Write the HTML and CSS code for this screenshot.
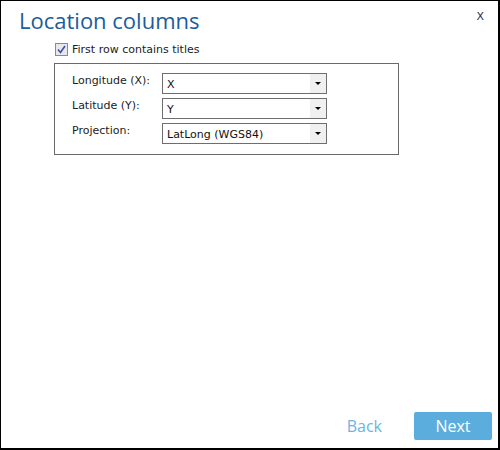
FILE: index.html
```html
<!DOCTYPE html>
<html>
<head>
<meta charset="utf-8">
<link rel="stylesheet" href="styles.css">
</head>
<body>
<div class="dialog">
  <div class="header">
    <h1 class="title">Location columns</h1>
    <span class="close">X</span>
  </div>
  <div class="content">
    <label class="check-row">
      <span class="checkbox">
        <svg width="9" height="9" viewBox="0 0 9 9"><path d="M1 4.5 L3.5 7.5 L8 1" fill="none" stroke="#3a4fb0" stroke-width="1.6"/></svg>
      </span>
      <span class="check-label">First row contains titles</span>
    </label>
    <div class="group">
      <div class="field">
        <span class="field-label">Longitude (X):</span>
        <div class="select"><span class="select-value">X</span><span class="select-arrow"></span></div>
      </div>
      <div class="field">
        <span class="field-label">Latitude (Y):</span>
        <div class="select"><span class="select-value">Y</span><span class="select-arrow"></span></div>
      </div>
      <div class="field">
        <span class="field-label">Projection:</span>
        <div class="select"><span class="select-value">LatLong (WGS84)</span><span class="select-arrow"></span></div>
      </div>
    </div>
  </div>
  <div class="footer">
    <span class="back">Back</span>
    <span class="next">Next</span>
  </div>
</div>
</body>
</html>
```
FILE: styles.css
```css
html, body {
  margin: 0;
  padding: 0;
  background: #fff;
}
.dialog {
  width: 500px;
  height: 450px;
  box-sizing: border-box;
  border: 1px solid #000;
  border-right-width: 2px;
  border-bottom-width: 2px;
  display: flex;
  flex-direction: column;
  font-family: "DejaVu Sans", sans-serif;
}
.header {
  display: flex;
  justify-content: space-between;
  align-items: flex-start;
}
.title {
  margin: 4px 0 0 18px;
  font-family: "Open Sans", sans-serif;
  font-weight: 400;
  font-size: 22px;
  line-height: 30px;
  color: #1b5c9c;
}
.close {
  margin: 9px 14px 0 0;
  font-size: 11px;
  color: #1e2f55;
}
.content {
  padding: 8px 0 0 53px;
}
.check-row {
  display: flex;
  align-items: center;
  gap: 4px;
  margin-left: 1px;
  height: 13px;
}
.checkbox {
  width: 11px;
  height: 11px;
  border: 1px solid #8a8a8a;
  background: #e8e8ec;
  display: flex;
  align-items: center;
  justify-content: center;
}
.check-label {
  font-size: 11px;
  color: #222;
}
.group {
  margin-top: 7px;
  width: 345px;
  height: 92px;
  border: 1px solid #6a6a6a;
  box-sizing: border-box;
  padding: 9px 0 0 17px;
  display: flex;
  flex-direction: column;
  gap: 4px;
}
.field {
  display: flex;
  align-items: flex-start;
}
.field-label {
  width: 90px;
  font-size: 11px;
  color: #222;
  padding-top: 1px;
}
.select {
  width: 165px;
  height: 21px;
  box-sizing: border-box;
  border: 1px solid #6e6e6e;
  display: flex;
  background: #fff;
}
.select-value {
  flex: 1;
  font-size: 11px;
  color: #111;
  padding: 4px 0 0 4px;
}
.select-arrow {
  width: 16px;
  background: #f0f0f0;
  display: flex;
  align-items: center;
  justify-content: center;
}
.select-arrow::after {
  content: "";
  border-left: 3px solid transparent;
  border-right: 3px solid transparent;
  border-top: 3px solid #000;
}
.footer {
  margin-top: auto;
  display: flex;
  justify-content: flex-end;
  align-items: center;
  gap: 32px;
  padding: 0 6px 8px 0;
}
.back {
  font-family: "Open Sans", sans-serif;
  font-size: 16px;
  color: #6cb4e2;
}
.next {
  width: 78px;
  height: 28px;
  border-radius: 2px;
  background: #5badde;
  color: #fff;
  font-family: "Open Sans", sans-serif;
  font-size: 16px;
  display: flex;
  align-items: center;
  justify-content: center;
}
```
